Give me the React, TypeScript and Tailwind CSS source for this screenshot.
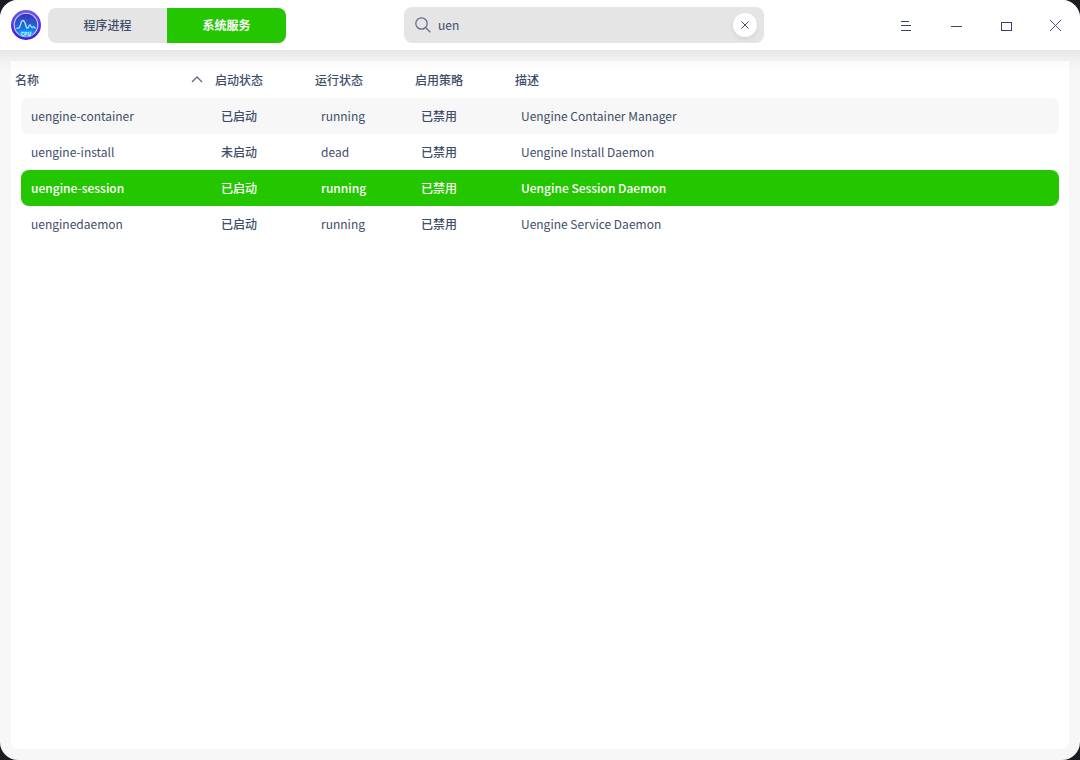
import { useState } from 'react';
import clsx from 'clsx';

const services = [
  { name: 'uengine-container', load: '已启动', state: 'running', policy: '已禁用', desc: 'Uengine Container Manager' },
  { name: 'uengine-install', load: '未启动', state: 'dead', policy: '已禁用', desc: 'Uengine Install Daemon' },
  { name: 'uengine-session', load: '已启动', state: 'running', policy: '已禁用', desc: 'Uengine Session Daemon' },
  { name: 'uenginedaemon', load: '已启动', state: 'running', policy: '已禁用', desc: 'Uengine Service Daemon' },
];

const tabs = ['程序进程', '系统服务'];

const Logo = () => (
  <svg viewBox="0 0 30 30" className="h-[30px] w-[30px] shrink-0" aria-hidden="true">
    <defs>
      <linearGradient id="ring" x1="0" y1="0" x2="0" y2="1">
        <stop offset="0" stopColor="#6a5af0" />
        <stop offset="1" stopColor="#4a10dc" />
      </linearGradient>
      <linearGradient id="dial" x1="0" y1="0" x2="0" y2="1">
        <stop offset="0" stopColor="#3a2fb4" />
        <stop offset="0.55" stopColor="#2460d8" />
        <stop offset="1" stopColor="#0a9cf8" />
      </linearGradient>
    </defs>
    <circle cx="15" cy="15" r="15" fill="url(#ring)" />
    <circle cx="15" cy="15" r="11.8" fill="url(#dial)" stroke="#d0ccfa" strokeWidth="1.1" />
    <path d="M15 4v22M5 10h20M4 15h22M9 5v19M21 5v19" stroke="#5a8cf0" strokeWidth="0.5" opacity="0.4" />
    <path
      d="M6 18.3c2.300 0 2.800-.8 3.700-4.200.6-2.400 1.200-3.600 2.300-3.600 1.500 0 2 2.300 2.700 4.700.5 1.900 1.100 3 1.900 3 1 0 1.200-3.200 2.300-3.200s1 2.600 2.100 2.600c.9 0 .8-1 1.500-1s.7 1.300 1.700 1.500"
      fill="none"
      stroke="#8feaff"
      strokeWidth="1.4"
      strokeLinecap="round"
    />
    <rect x="8.500" y="20.500" width="13" height="6" rx="1.500" fill="#10a8fb" />
    <text x="15" y="25.500" textAnchor="middle" fontSize="5" fontWeight="700" fill="#e4faff">CPU</text>
  </svg>
);

const TitleBar = () => {
  const [active, setActive] = useState(1);
  const [query, setQuery] = useState('uen');

  return (
    <header className="flex h-[50px] shrink-0 items-center bg-white pl-[11px]">
      <Logo />
      <div className="ml-[7px] flex h-[35px] w-[238px] shrink-0 overflow-hidden rounded-lg bg-[#e5e5e5]">
        {tabs.map((tab, i) => (
          <button
            key={tab}
            type="button"
            onClick={() => setActive(i)}
            className={clsx('flex-1', i === active ? 'bg-[#24c600] font-bold text-white' : 'font-medium')}
          >
            {tab}
          </button>
        ))}
      </div>

      <div className="flex flex-1 justify-center pr-4 pl-[18px]">
        <div className="flex h-9 w-[360px] items-center rounded-lg bg-[#e5e5e5] pr-[7px] pl-[11px]">
          <svg viewBox="0 0 16 16" className="h-4 w-4 shrink-0" fill="none" stroke="#5b6a86" aria-hidden="true">
            <circle cx="6.500" cy="6.500" r="5.700" strokeWidth="1.200" />
            <path d="M10.600 10.600 15.300 15.300" strokeWidth="1.300" />
          </svg>
          <input
            type="text"
            aria-label="搜索"
            value={query}
            onChange={(e) => setQuery(e.target.value)}
            className="ml-[7px] min-w-0 flex-1 bg-transparent outline-none"
          />
          <button
            type="button"
            aria-label="清除"
            onClick={() => setQuery('')}
            className="flex h-6 w-6 items-center justify-center rounded-full bg-white shadow-[0_2px_4px_rgba(0,0,0,0.08)]"
          >
            <svg viewBox="0 0 8 8" className="h-2 w-2" stroke="#414d68" aria-hidden="true">
              <path d="M0.500 0.500 7.500 7.500M7.500 0.500 0.500 7.500" />
            </svg>
          </button>
        </div>
      </div>

      <div className="flex h-full">
        <button type="button" aria-label="菜单" className="flex w-[50px] items-center justify-center">
          <svg viewBox="0 0 14 14" className="h-[14px] w-[14px]" stroke="#3b4468" shapeRendering="crispEdges" aria-hidden="true">
            <path d="M3 3.500h8M3 7.500h10M3 12.500h10" />
          </svg>
        </button>
        <button type="button" aria-label="最小化" className="flex w-[50px] items-center justify-center">
          <svg viewBox="0 0 14 14" className="h-[14px] w-[14px]" stroke="#3b4468" shapeRendering="crispEdges" aria-hidden="true">
            <path d="M3 8.500h11" />
          </svg>
        </button>
        <button type="button" aria-label="最大化" className="flex w-[50px] items-center justify-center">
          <svg viewBox="0 0 14 14" className="h-[14px] w-[14px]" fill="none" stroke="#3b4468" shapeRendering="crispEdges" aria-hidden="true">
            <path d="M3.500 4.500h10v8h-10z" />
          </svg>
        </button>
        <button type="button" aria-label="关闭" className="flex w-[50px] items-center justify-center">
          <svg viewBox="0 0 14 14" className="h-[14px] w-[14px]" stroke="#3b4468" strokeWidth="0.900" aria-hidden="true">
            <path d="M2 2 13 13M13 2 2 13" />
          </svg>
        </button>
      </div>
    </header>
  );
};

const ServiceTable = () => {
  const [selected, setSelected] = useState('uengine-session');

  return (
    <table className="w-full table-fixed border-collapse text-left">
      <colgroup>
        <col className="w-[200px]" />
        <col className="w-[100px]" />
        <col className="w-[100px]" />
        <col className="w-[100px]" />
        <col />
      </colgroup>
      <thead>
        <tr className="h-[37px]">
          <th className="pr-2 pl-1 font-medium" aria-sort="ascending">
            <button type="button" className="flex w-full items-center justify-between">
              名称
              <svg viewBox="0 0 12 8" className="h-2 w-3" fill="none" stroke="#5b6a86" strokeWidth="1.300" aria-hidden="true">
                <path d="M1 6 6 1l5 5" />
              </svg>
            </button>
          </th>
          <th className="pl-1 font-medium">启动状态</th>
          <th className="pl-1 font-medium">运行状态</th>
          <th className="pl-1 font-medium">启用策略</th>
          <th className="pl-1 font-medium">描述</th>
        </tr>
      </thead>
      <tbody>
        {services.map((s, i) => {
          const isSelected = s.name === selected;
          // background sits on inner blocks so the row can be inset and rounded
          const cell = clsx(
            'flex h-9 items-center pl-[10px]',
            isSelected ? 'bg-[#24c600] font-medium text-white' : i === 0 && 'bg-[#f7f7f7]'
          );
          return (
            <tr key={s.name} onClick={() => setSelected(s.name)} aria-selected={isSelected}>
              <td className="p-0 pl-[10px]">
                <div className={clsx(cell, 'rounded-l-lg')}>{s.name}</div>
              </td>
              <td className="p-0"><div className={clsx(cell, 'font-medium')}>{s.load}</div></td>
              <td className="p-0"><div className={cell}>{s.state}</div></td>
              <td className="p-0"><div className={clsx(cell, 'font-medium')}>{s.policy}</div></td>
              <td className="p-0 pr-[10px]">
                <div className={clsx(cell, 'rounded-r-lg')}>{s.desc}</div>
              </td>
            </tr>
          );
        })}
      </tbody>
    </table>
  );
};

const App = () => (
  <div className="min-h-screen bg-[#1c1d21]">
    <div className="flex min-h-screen flex-col overflow-hidden rounded-[18px] bg-[#f7f7f7] font-['Noto_Sans_CJK_SC',sans-serif] text-[12px] leading-[18px] text-[#414d68]">
      <TitleBar />
      <main className="relative flex flex-1 flex-col p-[11px]">
        <section className="flex-1 rounded-b-lg bg-white">
          <ServiceTable />
        </section>
        {/* Title bar shadow */}
        <div className="pointer-events-none absolute inset-x-0 top-0 h-[11px] bg-linear-to-b from-black/7 to-black/2" />
        <div className="pointer-events-none absolute inset-x-0 top-[11px] h-3 bg-linear-to-b from-black/2 to-transparent" />
      </main>
    </div>
  </div>
);

export default App;
